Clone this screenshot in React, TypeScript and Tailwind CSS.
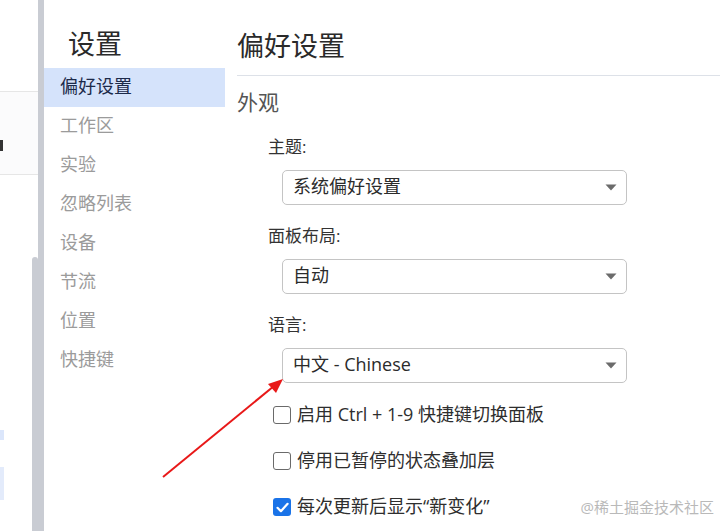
import React from "react";

const navItems = ["偏好设置", "工作区", "实验", "忽略列表", "设备", "节流", "位置", "快捷键"];

function Select({ value }: { value: string }) {
    return (
        <div className="ml-[45px] mr-[93px] h-[35px] rounded-[5px] border border-[#c4c4c4] bg-white flex items-center justify-between pl-[10px] pr-[9px]">
            <span className="text-[18px] text-[#2b2b2b] leading-none pb-[3px]">{value}</span>
            <svg width="12" height="7" viewBox="0 0 12 7">
                <path d="M0.5 0.5h11L6 6.5z" fill="#6b6b6b" />
            </svg>
        </div>
    );
}

function Label({ text }: { text: string }) {
    return (
        <div className="h-[30px] flex items-center pl-[31px] pb-[2px] text-[17px] text-[#333] leading-none">
            {text}
        </div>
    );
}

function Check({ label, checked }: { label: string; checked?: boolean }) {
    return (
        <div className="h-[46px] flex items-center pl-[36px] gap-[6px]">
            {checked ? (
                <span className="w-[18px] h-[18px] rounded-[3px] bg-[#1a73e8] flex items-center justify-center">
                    <svg width="13" height="11" viewBox="0 0 13 11">
                        <path d="M1.5 5.8l3.4 3.4L11.6 1.8" stroke="white" strokeWidth="2.2" fill="none" strokeLinecap="round" strokeLinejoin="round" />
                    </svg>
                </span>
            ) : (
                <span className="w-[18px] h-[18px] rounded-[3px] border-[1.5px] border-[#6a6a6a] bg-white" />
            )}
            <span className="text-[18px] text-[#2e2e2e] leading-none pb-[2px]">{label}</span>
        </div>
    );
}

export default function App() {
    return (
        <div className="relative w-[720px] h-[531px] bg-white flex overflow-hidden font-['Open_Sans','Noto_Sans_CJK_SC',sans-serif]">
            {/* pane behind, mostly cut off */}
            <div className="relative w-[38px] shrink-0 flex flex-col bg-white">
                <div className="h-[92px] border-b border-[#e6e6e6]" />
                <div className="h-[83px] border-b border-[#e6e6e6] bg-[#fbfbfc] flex items-center">
                    <span className="w-[3px] h-[11px] mt-[24px] bg-[#333]" />
                </div>
                <div className="h-[255px]" />
                <div className="h-[10px] w-[4px] bg-[#dbe6fb]" />
                <div className="h-[27px]" />
                <div className="h-[33px] w-[4px] bg-[#e3ebfb]" />
                <div className="absolute right-0 top-[257px] bottom-0 w-[6px] rounded-t-[3px] bg-[#c9ccd3]" />
            </div>
            <div className="w-[6px] shrink-0 bg-[#c9ccd3]" />

            {/* settings nav */}
            <div className="w-[181px] shrink-0 flex flex-col">
                <div className="h-[68px] pt-[19px] flex items-center pl-[24px] text-[27px] text-[#2a2a2a] leading-none">
                    设置
                </div>
                {navItems.map((item, i) => (
                    <div
                        key={item}
                        className={
                            i === 0
                                ? "h-[39px] flex items-center pl-[16px] pb-[4px] bg-[#d5e3fb] text-[18px] text-[#1c2a4a] leading-none"
                                : "h-[39px] flex items-center pl-[16px] pb-[4px] text-[18px] text-[#9b9b9b] leading-none"
                        }
                    >
                        {item}
                    </div>
                ))}
            </div>

            {/* main */}
            <div className="flex-1 flex flex-col pl-[12px]">
                <div className="h-[76px] pt-[15px] flex items-center border-b border-[#dde1e8] text-[27px] text-[#2a2a2a] leading-none">
                    偏好设置
                </div>
                <div className="h-[56px] flex items-center pb-[3px] text-[21px] text-[#555] leading-none">外观</div>
                <Label text="主题:" />
                <div className="mt-[8px]">
                    <Select value="系统偏好设置" />
                </div>
                <div className="mt-[16px]">
                    <Label text="面板布局:" />
                </div>
                <div className="mt-[8px]">
                    <Select value="自动" />
                </div>
                <div className="mt-[16px]">
                    <Label text="语言:" />
                </div>
                <div className="mt-[8px]">
                    <Select value="中文 - Chinese" />
                </div>
                <div className="mt-[9px] flex flex-col">
                    <Check label="启用 Ctrl + 1-9 快捷键切换面板" />
                    <Check label="停用已暂停的状态叠加层" />
                    <Check label="每次更新后显示“新变化”" checked />
                </div>
            </div>

            {/* annotation arrow */}
            <svg className="absolute left-0 top-0 pointer-events-none" width="720" height="531">
                <line x1="163" y1="477" x2="274" y2="386" stroke="#e81818" strokeWidth="2" />
                <path d="M283 379 L268 384 L276 393 Z" fill="#e81818" />
            </svg>

            <div className="absolute right-[6px] bottom-[16px] text-[15px] text-[#b9b9b9] leading-none">
                @稀土掘金技术社区
            </div>
        </div>
    );
}
